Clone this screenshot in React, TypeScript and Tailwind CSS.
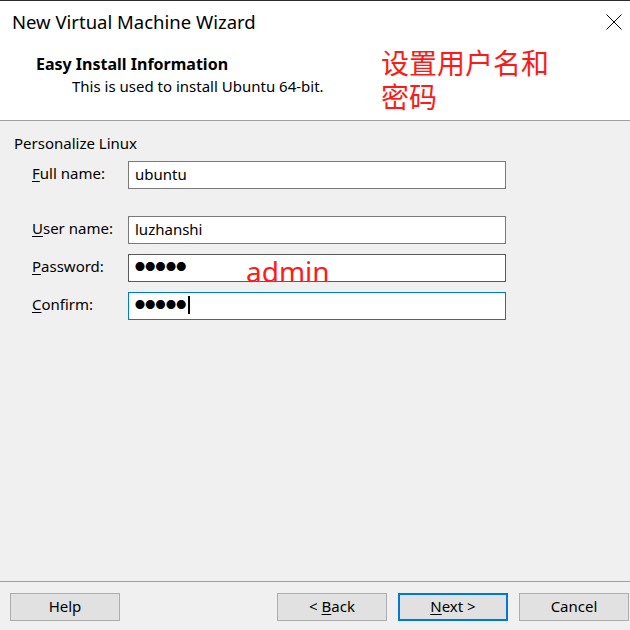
const font = { fontFamily: '"Noto Sans", "Noto Sans CJK SC", sans-serif' };

function Field({ ul, rest, value, state }: { ul: string; rest: string; value: React.ReactNode; state?: 'hover' | 'focus' }) {
  const border =
    state === 'focus' ? 'border-[#0078d7]' : state === 'hover' ? 'border-[#5a5a5a]' : 'border-[#7a7a7a]';
  return (
    <div className="flex items-center h-[28px]">
      <span className="w-[96px] pl-[32px] box-content text-[15px] leading-[20px] pb-[4px] text-black">
        <span className="underline underline-offset-2">{ul}</span>
        {rest}
      </span>
      <div className={`w-[378px] h-[28px] bg-white border ${border} flex items-center px-[6px] pb-[3px] text-[15px] leading-[20px] text-black`}>
        {value}
      </div>
    </div>
  );
}

function Btn({ children, primary, className = '' }: { children: React.ReactNode; primary?: boolean; className?: string }) {
  return (
    <div
      className={`w-[110px] h-[28px] flex items-center justify-center pb-[2px] bg-[#e1e1e1] text-[15px] text-black ${
        primary ? 'border-2 border-[#0078d7]' : 'border border-[#adadad]'
      } ${className}`}
    >
      {children}
    </div>
  );
}

const dots = <span className="text-[10px] tracking-[0.3px]">●●●●●</span>;

export default function App() {
  return (
    <div className="relative w-[630px] h-[630px] bg-[#f0f0f0] flex flex-col overflow-hidden" style={font}>
      <div className="h-[121px] bg-white border-t border-[#2b2b2b] border-b border-b-[#a0a0a0] flex flex-col items-start">
        <div className="self-stretch flex items-center justify-between h-[42px] pl-[12px] pr-[8px]">
          <span className="text-[18.5px] text-black">New Virtual Machine Wizard</span>
          <svg width="16" height="16" viewBox="0 0 16 16">
            <path d="M0.5 0.5 L15.5 15.5 M15.5 0.5 L0.5 15.5" stroke="#000" strokeWidth="1" fill="none" />
          </svg>
        </div>
        <div className="ml-[36px] mt-[10px] text-[16px] font-bold text-black leading-[22px]">Easy Install Information</div>
        <div className="ml-[72px] text-[15px] text-black leading-[22px]">This is used to install Ubuntu 64-bit.</div>
      </div>

      <div className="flex-1 flex flex-col">
        <div className="pl-[14px] pt-[12px] text-[15px] text-black leading-[20px]">Personalize Linux</div>
        <div className="mt-[8px] flex flex-col">
          <Field ul="F" rest="ull name:" value="ubuntu" />
          <div className="h-[27px]" />
          <Field ul="U" rest="ser name:" value="luzhanshi" />
          <div className="h-[10px]" />
          <Field ul="P" rest="assword:" value={dots} state="hover" />
          <div className="h-[10px]" />
          <Field
            ul="C"
            rest="onfirm:"
            value={
              <span className="flex items-center">
                {dots}
                <span className="ml-[1px] w-[2px] h-[18px] bg-black" />
              </span>
            }
            state="focus"
          />
        </div>
      </div>

      <div className="h-[49px] border-t border-[#a0a0a0] flex items-start pt-[11px] px-[10px]">
        <Btn>Help</Btn>
        <div className="flex-1" />
        <Btn>
          &lt;&nbsp;<span className="underline underline-offset-2">B</span>ack
        </Btn>
        <Btn primary className="ml-[11px]">
          <span className="underline underline-offset-2">N</span>ext &gt;
        </Btn>
        <Btn className="ml-[11px] mr-[-9px]">Cancel</Btn>
      </div>

      <div className="absolute left-[381px] top-[46px] text-[28px] leading-[34px] text-[#ff1a1a]">
        设置用户名和
        <br />
        密码
      </div>
      <div className="absolute left-[246px] top-[254px] text-[28px] leading-[34px] text-[#ff1a1a]">admin</div>
    </div>
  );
}
